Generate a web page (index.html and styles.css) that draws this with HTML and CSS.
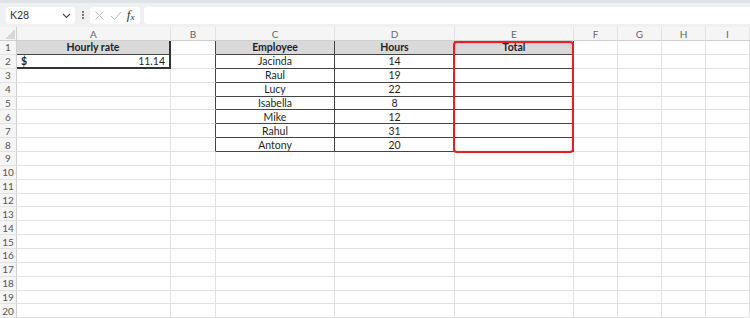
FILE: index.html
```html
<!DOCTYPE html>
<html lang="en">
<head>
    <meta charset="UTF-8">
    <title>Hourly rate sheet</title>
    <link rel="stylesheet" href="styles.css">
</head>
<body>
    <div class="toolbar">
        <div class="name-box">
            <span>K28</span>
            <svg class="chevron" width="9" height="6" viewBox="0 0 9 6"><path d="M1 1l3.5 3.5L8 1" fill="none" stroke="#444" stroke-width="1.1"/></svg>
        </div>
        <div class="dots"><i></i><i></i><i></i></div>
        <div class="fx-box">
            <svg width="11" height="11" viewBox="0 0 11 11"><path d="M1.5 1.5l8 8M9.5 1.5l-8 8" stroke="#b9b9b9" stroke-width="1"/></svg>
            <svg width="12" height="11" viewBox="0 0 12 11"><path d="M1 6l3.5 3.5L11 2" fill="none" stroke="#b9b9b9" stroke-width="1"/></svg>
            <span class="fx">f<sub>x</sub></span>
        </div>
        <div class="formula"></div>
    </div>

    <div class="sheet">
        <table class="grid">
            <tr class="col-heads">
                <th class="corner"><svg width="10" height="10" viewBox="0 0 10 10"><path d="M10 0v10H0z" fill="#d8d8d8"/></svg></th>
                <th class="col-a">A</th><th class="col-b">B</th><th class="col-c">C</th><th class="col-d">D</th><th class="col-e">E</th><th class="col-s">F</th><th class="col-s">G</th><th class="col-s">H</th><th class="col-s">I</th>
            </tr>
            <tr>
                <th>1</th>
                <td class="rate-head">Hourly rate</td><td class="edge-r"></td>
                <td class="data head">Employee</td><td class="data head">Hours</td><td class="data head">Total</td>
                <td></td><td></td><td></td><td></td>
            </tr>
            <tr>
                <th>2</th>
                <td class="rate"><span>$</span><span>11.14</span></td><td class="edge-r"></td>
                <td class="data">Jacinda</td><td class="data">14</td><td class="data"></td>
                <td></td><td></td><td></td><td></td>
            </tr>
            <tr>
                <th>3</th><td></td><td class="edge-r"></td>
                <td class="data">Raul</td><td class="data">19</td><td class="data"></td>
                <td></td><td></td><td></td><td></td>
            </tr>
            <tr>
                <th>4</th><td></td><td class="edge-r"></td>
                <td class="data">Lucy</td><td class="data">22</td><td class="data"></td>
                <td></td><td></td><td></td><td></td>
            </tr>
            <tr>
                <th>5</th><td></td><td class="edge-r"></td>
                <td class="data">Isabella</td><td class="data">8</td><td class="data"></td>
                <td></td><td></td><td></td><td></td>
            </tr>
            <tr>
                <th>6</th><td></td><td class="edge-r"></td>
                <td class="data">Mike</td><td class="data">12</td><td class="data"></td>
                <td></td><td></td><td></td><td></td>
            </tr>
            <tr>
                <th>7</th><td></td><td class="edge-r"></td>
                <td class="data">Rahul</td><td class="data">31</td><td class="data"></td>
                <td></td><td></td><td></td><td></td>
            </tr>
            <tr>
                <th>8</th><td></td><td class="edge-r"></td>
                <td class="data">Antony</td><td class="data">20</td><td class="data"></td>
                <td></td><td></td><td></td><td></td>
            </tr>
            <tr><th>9</th><td></td><td></td><td></td><td></td><td></td><td></td><td></td><td></td><td></td></tr>
            <tr><th>10</th><td></td><td></td><td></td><td></td><td></td><td></td><td></td><td></td><td></td></tr>
            <tr><th>11</th><td></td><td></td><td></td><td></td><td></td><td></td><td></td><td></td><td></td></tr>
            <tr><th>12</th><td></td><td></td><td></td><td></td><td></td><td></td><td></td><td></td><td></td></tr>
            <tr><th>13</th><td></td><td></td><td></td><td></td><td></td><td></td><td></td><td></td><td></td></tr>
            <tr><th>14</th><td></td><td></td><td></td><td></td><td></td><td></td><td></td><td></td><td></td></tr>
            <tr><th>15</th><td></td><td></td><td></td><td></td><td></td><td></td><td></td><td></td><td></td></tr>
            <tr><th>16</th><td></td><td></td><td></td><td></td><td></td><td></td><td></td><td></td><td></td></tr>
            <tr><th>17</th><td></td><td></td><td></td><td></td><td></td><td></td><td></td><td></td><td></td></tr>
            <tr><th>18</th><td></td><td></td><td></td><td></td><td></td><td></td><td></td><td></td><td></td></tr>
            <tr><th>19</th><td></td><td></td><td></td><td></td><td></td><td></td><td></td><td></td><td></td></tr>
            <tr><th>20</th><td></td><td></td><td></td><td></td><td></td><td></td><td></td><td></td><td></td></tr>
        </table>
        <div class="highlight"></div>
    </div>
</body>
</html>
```

FILE: styles.css
```css
body {
    margin: 0;
    font-family: Lato, 'Liberation Sans', sans-serif;
    color: #1f1f1f;
    background: #fff;
    overflow: hidden;
}
.toolbar {
    display: flex;
    align-items: center;
    height: 24px;
    padding: 0 0 0 6px;
    background: #eef0f2;
    border-top: 3px solid #e0e3e6;
}
.name-box {
    display: flex;
    align-items: center;
    justify-content: space-between;
    width: 69px;
    height: 17px;
    box-sizing: border-box;
    padding: 0 4px 0 4px;
    background: #fff;
    border-radius: 3px;
    font-size: 10.5px;
    color: #333;
}
.chevron {
    margin-top: 1px;
}
.dots {
    display: flex;
    flex-direction: column;
    gap: 1.5px;
    margin: 0 6px 0 7px;
}
.dots i {
    width: 1.8px;
    height: 1.8px;
    background: #555;
    border-radius: 50%;
}
.fx-box {
    display: flex;
    align-items: center;
    gap: 5px;
    width: 50px;
    height: 17px;
    box-sizing: border-box;
    padding: 0 4px 0 4px;
    background: #fff;
    border-radius: 3px;
}
.fx {
    font-family: 'Liberation Serif', serif;
    font-style: italic;
    font-size: 13px;
    color: #333;
    line-height: 1;
}
.fx sub {
    font-size: 9px;
    vertical-align: -1px;
}
.formula {
    flex: 1;
    height: 17px;
    margin-left: 4px;
    background: #fff;
    border-radius: 3px 0 0 3px;
}

.sheet {
    position: relative;
}
.grid {
    border-collapse: separate;
    border-spacing: 0;
    table-layout: fixed;
    font-size: 10.5px;
}
.grid th, .grid td {
    box-sizing: border-box;
    height: 13.87px;
    padding: 1px 3px 0;
    line-height: 11px;
    white-space: nowrap;
    overflow: hidden;
    border-right: 1px solid #e2e2e2;
    border-bottom: 1px solid #e2e2e2;
}
.col-heads th {
    height: 14px;
    background: #f5f5f5;
    color: #666;
    font-weight: normal;
    font-size: 10px;
    border-bottom: 1px solid #cfcfcf;
    border-right: 1px solid #e2e2e2;
}
.grid .corner {
    width: 17px;
    padding: 0;
    text-align: right;
    vertical-align: bottom;
    border-right: 1px solid #cfcfcf;
}
.corner svg {
    display: block;
    margin: 0 1px 1px auto;
}
.col-a { width: 154px; }
.col-b { width: 45px; }
.col-c { width: 119px; }
.col-d { width: 120px; }
.col-e { width: 119px; }
.col-s { width: 44px; }
.grid tr > th:first-child {
    padding: 1px 0 0;
    background: #f5f5f5;
    color: #555;
    font-weight: normal;
    font-size: 10px;
    text-align: center;
    border-right: 1px solid #cfcfcf;
}
.grid .rate-head {
    background: #d9d9d9;
    font-weight: bold;
    text-align: center;
    border-bottom: 1px solid #444;
    border-right: 2px solid #333;
}
.grid .rate {
    padding: 1px 4px 0;
    border-bottom: 2px solid #333;
    border-right: 2px solid #333;
}
.rate span:last-child {
    float: right;
}
.rate span:first-child {
    font-weight: bold;
}
.grid .edge-r {
    border-right: 1px solid #444;
}
.grid .data {
    text-align: center;
    border-right: 1px solid #444;
    border-bottom: 1px solid #444;
}
.grid .head {
    background: #d9d9d9;
    font-weight: bold;
}
.highlight {
    position: absolute;
    left: 453px;
    top: 14px;
    width: 121px;
    height: 112px;
    box-sizing: border-box;
    border: 2px solid #ea1d25;
    border-radius: 4px;
    box-shadow: inset 0 0 3px rgba(0, 0, 0, 0.15);
}
```
